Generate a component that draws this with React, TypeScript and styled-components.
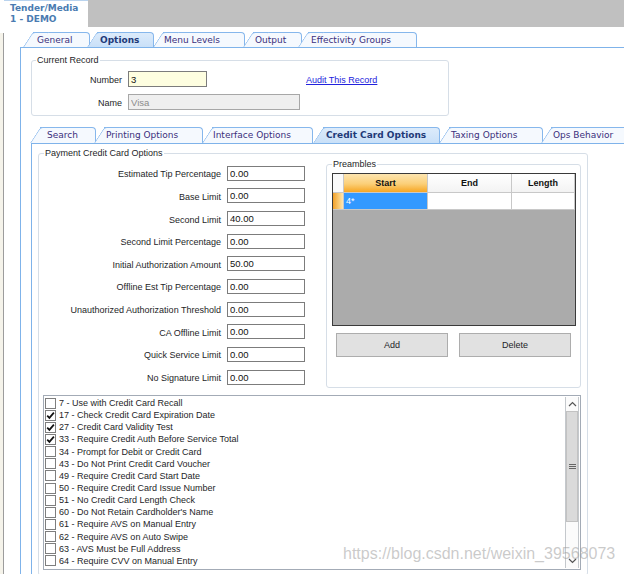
import React from 'react';
import styled, { createGlobalStyle } from 'styled-components';

const GlobalStyle = createGlobalStyle`
    html, body {
        margin: 0;
        padding: 0;
        background: #ffffff;
    }
    body {
        font-family: 'Liberation Sans', Arial, sans-serif;
    }
`;

const outerTabs = [
    { label: 'General', w: 57, ml: 13, pl: 4 },
    { label: 'Options', w: 57, ml: 7, pl: 3, active: true },
    { label: 'Menu Levels', w: 82, ml: 9, pl: 1 },
    { label: 'Output', w: 49, ml: 8, pl: 2 },
    { label: 'Effectivity Groups', w: 109, ml: 6, pl: 3 },
];

const innerTabs = [
    { label: 'Search', w: 56, ml: 9, pl: 7 },
    { label: 'Printing Options', w: 99, ml: 8, pl: 2 },
    { label: 'Interface Options', w: 101, ml: 9, pl: 1 },
    { label: 'Credit Card Options', w: 117, ml: 10, pl: 3, active: true },
    { label: 'Taxing Options', w: 94, ml: 9, pl: 2 },
    { label: 'Ops Behavior', w: 90, ml: 8, pl: 2 },
];

const limits = [
    { label: 'Estimated Tip Percentage', value: '0.00' },
    { label: 'Base Limit', value: '0.00' },
    { label: 'Second Limit', value: '40.00' },
    { label: 'Second Limit Percentage', value: '0.00' },
    { label: 'Initial Authorization Amount', value: '50.00' },
    { label: 'Offline Est Tip Percentage', value: '0.00' },
    { label: 'Unauthorized Authorization Threshold', value: '0.00' },
    { label: 'CA Offline Limit', value: '0.00' },
    { label: 'Quick Service Limit', value: '0.00' },
    { label: 'No Signature Limit', value: '0.00' },
];

const options = [
    { label: '7 - Use with Credit Card Recall', checked: false },
    { label: '17 - Check Credit Card Expiration Date', checked: true },
    { label: '27 - Credit Card Validity Test', checked: true },
    { label: '33 - Require Credit Auth Before Service Total', checked: true },
    { label: '34 - Prompt for Debit or Credit Card', checked: false },
    { label: '43 - Do Not Print Credit Card Voucher', checked: false },
    { label: '49 - Require Credit Card Start Date', checked: false },
    { label: '50 - Require Credit Card Issue Number', checked: false },
    { label: '51 - No Credit Card Length Check', checked: false },
    { label: "60 - Do Not Retain Cardholder's Name", checked: false },
    { label: '61 - Require AVS on Manual Entry', checked: false },
    { label: '62 - Require AVS on Auto Swipe', checked: false },
    { label: '63 - AVS Must be Full Address', checked: false },
    { label: '64 - Require CVV on Manual Entry', checked: false },
];

const App = () => {
    return (
        <Screen>
            <GlobalStyle />
            <TopBar>
                <DocTab>
                    Tender/Media
                    <br />1 - DEMO
                </DocTab>
            </TopBar>
            <Main>
                <LeftStrip />
                <TabControl $offset={16}>
                    <TabStrip $h={15} $top={5}>
                        {outerTabs.map((t) => (
                            <Tab key={t.label} $w={t.w} $ml={t.ml} $pl={t.pl} $active={t.active}>
                                {t.label}
                            </Tab>
                        ))}
                    </TabStrip>
                    <TabPage $pt={7} $pl={10}>
                        <GroupBox $w={418}>
                            <Legend $ml={4}>Current Record</Legend>
                            <RecordRow $mt={5}>
                                <RecordLabel>Number</RecordLabel>
                                <TextBox $w={79} $tone="edit" value="3" readOnly />
                                <AuditLink href="#">Audit This Record</AuditLink>
                            </RecordRow>
                            <RecordRow $mt={7}>
                                <RecordLabel>Name</RecordLabel>
                                <TextBox $w={172} $tone="disabled" value="Visa" readOnly />
                            </RecordRow>
                        </GroupBox>

                        <TabControl $offset={0} $mt={11}>
                            <TabStrip $h={16} $top={0}>
                                {innerTabs.map((t) => (
                                    <Tab key={t.label} $w={t.w} $ml={t.ml} $pl={t.pl} $active={t.active}>
                                        {t.label}
                                    </Tab>
                                ))}
                            </TabStrip>
                            <TabPage $pt={4} $pl={6}>
                                <GroupBox $w={550}>
                                    <Legend $ml={5}>Payment Credit Card Options</Legend>
                                    <TopSection>
                                        <LimitGrid>
                                            {limits.map((l) => (
                                                <React.Fragment key={l.label}>
                                                    <LimitLabel>{l.label}</LimitLabel>
                                                    <TextBox $w={78} $h={15} value={l.value} readOnly />
                                                </React.Fragment>
                                            ))}
                                        </LimitGrid>
                                        <PreamblesBox>
                                            <Legend $ml={5}>Preambles</Legend>
                                            <DataGrid>
                                                <GridRow $h={19}>
                                                    <RowHeader />
                                                    <ColHeader $w={84} $current>Start</ColHeader>
                                                    <ColHeader $w={84}>End</ColHeader>
                                                    <ColHeader $w={63}>Length</ColHeader>
                                                </GridRow>
                                                <GridRow $h={17}>
                                                    <RowHeader $current />
                                                    <Cell $w={84} $selected>4*</Cell>
                                                    <Cell $w={84} />
                                                    <Cell $w={63} />
                                                </GridRow>
                                            </DataGrid>
                                            <ButtonRow>
                                                <PushButton>Add</PushButton>
                                                <PushButton>Delete</PushButton>
                                            </ButtonRow>
                                        </PreamblesBox>
                                    </TopSection>
                                    <CheckList>
                                        <Items>
                                            {options.map((o) => (
                                                <Item key={o.label}>
                                                    <CheckBox>
                                                        {o.checked && (
                                                            <svg width="9" height="9" viewBox="0 0 9 9">
                                                                <path
                                                                    d="M1.2 4.6 L3.4 6.9 L7.9 1.6"
                                                                    fill="none"
                                                                    stroke="#111"
                                                                    strokeWidth="1.7"
                                                                />
                                                            </svg>
                                                        )}
                                                    </CheckBox>
                                                    <ItemText>{o.label}</ItemText>
                                                </Item>
                                            ))}
                                        </Items>
                                        <ScrollBar>
                                            <ScrollArrow>
                                                <svg width="9" height="6" viewBox="0 0 9 6">
                                                    <path d="M1 5 L4.5 1.5 L8 5" fill="none" stroke="#555" strokeWidth="1.2" />
                                                </svg>
                                            </ScrollArrow>
                                            <Thumb>
                                                <svg width="7" height="6" viewBox="0 0 7 6">
                                                    <path d="M0 0.5 H7 M0 2.5 H7 M0 4.5 H7" stroke="#666" strokeWidth="1" />
                                                </svg>
                                            </Thumb>
                                            <Track />
                                            <ScrollArrow>
                                                <svg width="9" height="6" viewBox="0 0 9 6">
                                                    <path d="M1 1 L4.5 4.5 L8 1" fill="none" stroke="#555" strokeWidth="1.2" />
                                                </svg>
                                            </ScrollArrow>
                                        </ScrollBar>
                                    </CheckList>
                                </GroupBox>
                            </TabPage>
                        </TabControl>
                    </TabPage>
                </TabControl>
            </Main>
            <Watermark>https://blog.csdn.net/weixin_39568073</Watermark>
        </Screen>
    );
};

const Screen = styled.div`
    position: relative;
    width: 624px;
    height: 574px;
    overflow: hidden;
    display: flex;
    flex-direction: column;
    background: #ffffff;
`;

const TopBar = styled.div`
    flex: none;
    display: flex;
    height: 27px;
    background: #c0c0c0;
    border-left: 4px solid #ffffff;
`;

const DocTab = styled.div`
    box-sizing: border-box;
    width: 84px;
    padding: 2px 0 0 6px;
    background: #ffffff;
    border-top: 1px solid #b9d3ee;
    font: bold 9px 'DejaVu Sans', Verdana, sans-serif;
    line-height: 11px;
    color: #4a7bb1;
`;

const Main = styled.div`
    flex: 1;
    display: flex;
    min-height: 0;
`;

const LeftStrip = styled.div`
    flex: none;
    width: 3px;
    margin-top: 6px;
    background: #f5f3ea;
    border-right: 1px solid #9c9c9c;
`;

const TabControl = styled.div<{ $offset: number; $mt?: number }>`
    flex: 1;
    display: flex;
    flex-direction: column;
    margin-left: ${(p) => p.$offset}px;
    margin-top: ${(p) => p.$mt || 0}px;
    min-width: 0;
`;

const TabStrip = styled.div<{ $h: number; $top: number }>`
    flex: none;
    display: flex;
    height: ${(p) => p.$h}px;
    margin-top: ${(p) => p.$top}px;
`;

const Tab = styled.div<{ $w: number; $ml: number; $pl: number; $active?: boolean }>`
    position: relative;
    z-index: ${(p) => (p.$active ? 3 : 1)};
    flex: none;
    box-sizing: border-box;
    width: ${(p) => p.$w}px;
    height: 100%;
    margin-left: ${(p) => p.$ml}px;
    padding-left: ${(p) => p.$pl}px;
    background: ${(p) => (p.$active ? 'linear-gradient(#dcebfb, #c9e0f8)' : '#f5f9fe')};
    border-top: 1px solid #86b7ec;
    border-right: 1px solid #86b7ec;
    border-top-right-radius: 4px;
    font-family: 'DejaVu Sans', Verdana, sans-serif;
    font-size: 9px;
    font-weight: ${(p) => (p.$active ? 'bold' : 'normal')};
    line-height: 15px;
    color: ${(p) => (p.$active ? '#1f3a78' : '#3b2f7c')};
    white-space: nowrap;

    &::before {
        content: '';
        position: absolute;
        z-index: -1;
        left: -10px;
        top: -1px;
        bottom: 0;
        width: 15px;
        background: inherit;
        border-left: 1px solid #86b7ec;
        border-top: 1px solid #86b7ec;
        border-top-left-radius: 3px;
        transform-origin: bottom left;
        transform: skewX(-33deg);
    }
`;

const TabPage = styled.div<{ $pt: number; $pl: number }>`
    flex: 1;
    display: flex;
    flex-direction: column;
    align-items: flex-start;
    padding: ${(p) => p.$pt}px 0 0 ${(p) => p.$pl}px;
    border-top: 1px solid #7fb3ea;
    border-left: 1px solid #7fb3ea;
    background: #ffffff;
    min-height: 0;
`;

const GroupBox = styled.fieldset<{ $w: number }>`
    flex: none;
    box-sizing: border-box;
    width: ${(p) => p.$w}px;
    margin: 0;
    padding: 0 0 5px 0;
    border: 1px solid #d6dee7;
    border-radius: 3px;
    min-width: 0;
`;

const Legend = styled.legend<{ $ml: number }>`
    margin-left: ${(p) => p.$ml}px;
    padding: 0 1px;
    font-size: 9px;
    line-height: 11px;
    color: #1e1e28;
`;

const RecordRow = styled.div<{ $mt: number }>`
    display: flex;
    align-items: center;
    height: 16px;
    margin-top: ${(p) => p.$mt}px;
`;

const RecordLabel = styled.span`
    width: 90px;
    margin-right: 6px;
    padding-top: 2px;
    text-align: right;
    font-size: 9px;
    color: #1e1e28;
`;

const TextBox = styled.input<{ $w: number; $h?: number; $tone?: 'edit' | 'disabled' }>`
    box-sizing: border-box;
    width: ${(p) => p.$w}px;
    height: ${(p) => p.$h || 16}px;
    margin: 0;
    padding: 0 2px;
    border: 1px solid ${(p) => (p.$tone === 'disabled' ? '#a7a7a7' : '#7c7c7c')};
    background: ${(p) =>
        p.$tone === 'edit' ? '#fefee0' : p.$tone === 'disabled' ? '#efefef' : '#ffffff'};
    color: ${(p) => (p.$tone === 'disabled' ? '#8c8c8c' : '#111111')};
    font-family: 'Liberation Sans', Arial, sans-serif;
    font-size: 9.5px;
    outline: none;
`;

const AuditLink = styled.a`
    margin-left: 99px;
    padding-top: 2px;
    font-size: 9px;
    color: #2222dd;
    text-decoration: underline;
`;

const TopSection = styled.div`
    display: flex;
    align-items: flex-start;
`;

const LimitGrid = styled.div`
    display: grid;
    grid-template-columns: 182px 78px;
    grid-auto-rows: 15px;
    column-gap: 6px;
    row-gap: 7.67px;
    margin-top: 6.7px;
    align-items: center;
`;

const LimitLabel = styled.span`
    padding-top: 2px;
    text-align: right;
    font-size: 9px;
    color: #1e1e28;
    white-space: nowrap;
`;

const PreamblesBox = styled.fieldset`
    box-sizing: border-box;
    width: 255px;
    height: 229px;
    margin: 0 0 0 21px;
    padding: 0;
    border: 1px solid #d6dee7;
    border-radius: 3px;
    min-width: 0;
`;

const DataGrid = styled.div`
    box-sizing: border-box;
    width: 244px;
    height: 153px;
    margin: 3px 0 0 5px;
    border: 1px solid #3a3a3a;
    background: #ababab;
`;

const GridRow = styled.div<{ $h: number }>`
    display: flex;
    height: ${(p) => p.$h}px;
`;

const RowHeader = styled.div<{ $current?: boolean }>`
    box-sizing: border-box;
    width: 11px;
    background: ${(p) =>
        p.$current ? 'linear-gradient(90deg, #f2a12a, #fbd283 70%, #fde6b4)' : '#fafafa'};
    border-right: 1px solid #c8c8c8;
    border-bottom: 1px solid #c8c8c8;
`;

const ColHeader = styled.div<{ $w: number; $current?: boolean }>`
    box-sizing: border-box;
    width: ${(p) => p.$w}px;
    display: flex;
    align-items: center;
    justify-content: center;
    background: ${(p) =>
        p.$current ? 'linear-gradient(#fde5b0, #fbcf78 55%, #f6a623)' : 'linear-gradient(#ffffff, #f3f3f3)'};
    border-right: 1px solid #c8c8c8;
    border-bottom: 1px solid #c8c8c8;
    font-size: 9px;
    font-weight: bold;
    color: #111111;
`;

const Cell = styled.div<{ $w: number; $selected?: boolean }>`
    box-sizing: border-box;
    width: ${(p) => p.$w}px;
    padding-left: 2px;
    background: ${(p) => (p.$selected ? '#3399ff' : '#ffffff')};
    border-right: 1px solid #c8c8c8;
    border-bottom: 1px solid #c8c8c8;
    font-size: 9px;
    line-height: 16px;
    color: #ffffff;
`;

const ButtonRow = styled.div`
    display: flex;
    gap: 11px;
    margin: 7px 0 0 9px;
`;

const PushButton = styled.button`
    box-sizing: border-box;
    width: 112px;
    height: 24px;
    margin: 0;
    padding: 0;
    background: #e1e1e1;
    border: 1px solid #adadad;
    font-family: 'Liberation Sans', Arial, sans-serif;
    font-size: 9px;
    color: #1e1e28;
`;

const CheckList = styled.div`
    box-sizing: border-box;
    display: flex;
    width: 538px;
    height: 175px;
    margin: 7px 0 0 4px;
    border: 1px solid #a3abb6;
    background: #ffffff;
`;

const Items = styled.div`
    flex: 1;
    padding-top: 1px;
`;

const Item = styled.div`
    display: flex;
    align-items: center;
    height: 12.15px;
`;

const CheckBox = styled.span`
    box-sizing: border-box;
    display: flex;
    align-items: center;
    justify-content: center;
    width: 11px;
    height: 11px;
    margin-left: 1px;
    border: 1px solid #7e7e7e;
    background: #ffffff;
`;

const ItemText = styled.span`
    margin-left: 3px;
    font-size: 9px;
    color: #1e1e28;
    white-space: nowrap;
`;

const ScrollBar = styled.div`
    box-sizing: border-box;
    display: flex;
    flex-direction: column;
    width: 14px;
    margin: 1px 1px 1px 0;
    border-left: 1px solid #c4c8cc;
    border-right: 1px solid #c4c8cc;
    background: #fbfbfb;
`;

const ScrollArrow = styled.div`
    flex: none;
    height: 14px;
    display: flex;
    align-items: center;
    justify-content: center;
`;

const Thumb = styled.div`
    flex: none;
    box-sizing: border-box;
    height: 111px;
    display: flex;
    align-items: center;
    justify-content: center;
    background: #dadada;
    border: 1px solid #c2c2c2;
`;

const Track = styled.div`
    flex: 1;
`;

const Watermark = styled.div`
    position: absolute;
    left: 343px;
    top: 545px;
    font-size: 16px;
    line-height: 18px;
    color: rgba(150, 150, 150, 0.5);
    pointer-events: none;
`;

export default App;
